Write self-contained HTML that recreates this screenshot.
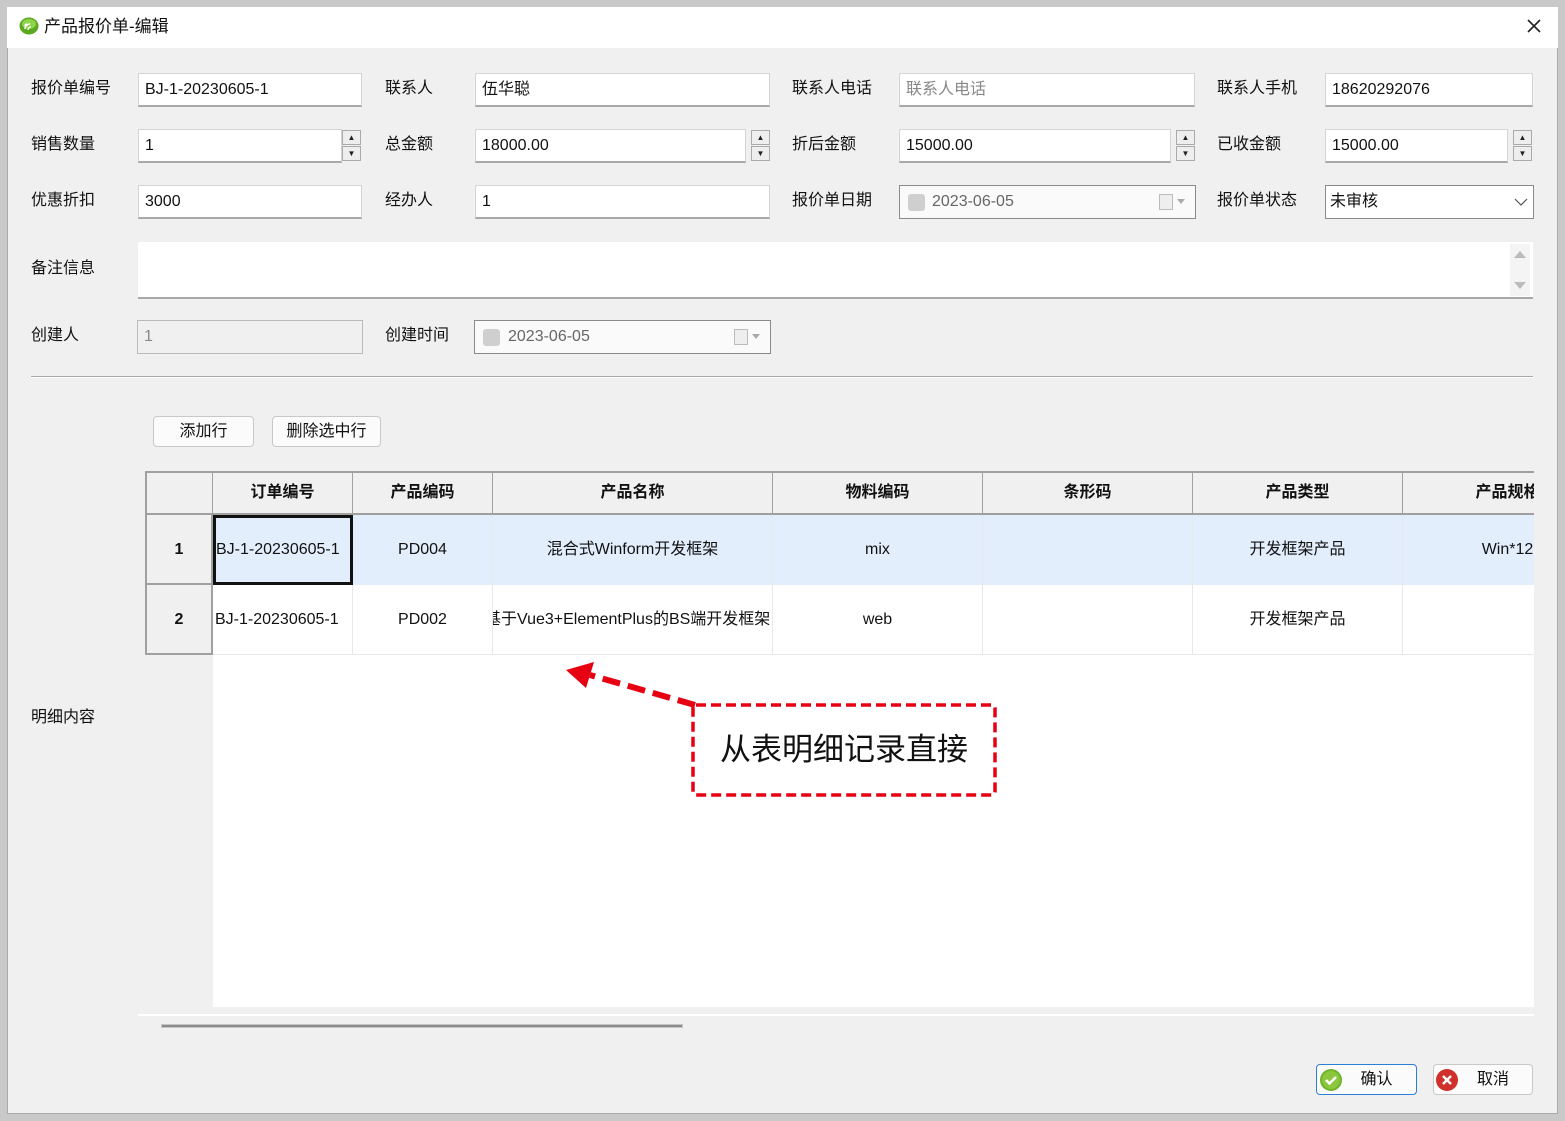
<!DOCTYPE html>
<html><head><meta charset="utf-8"><style>
*{box-sizing:border-box;margin:0;padding:0}
body{width:1565px;height:1121px;background:#c9c9c9;font-family:"Liberation Sans","Noto Sans CJK SC",sans-serif;font-size:16px;color:#111;position:relative;overflow:hidden}
.a{position:absolute}
.win{left:7px;top:7px;width:1551px;height:1107px;background:#f0f0f0;border:1px solid #aaa}
.title{left:7px;top:7px;width:1551px;height:41px;background:#fff}
.lbl{line-height:34px;font-size:16px}
.in{background:#fff;border:1px solid #d4d4d4;border-bottom:2px solid #a8a8a8;height:34px;line-height:31px;padding-left:6px;font-size:16px;white-space:nowrap;overflow:hidden}
.spin{width:20px;height:33px}
.spin div{height:15px;margin:1px 0 1px 1px;border:1px solid #aaa;background:#eee;font-size:8px;line-height:13px;text-align:center;color:#222}
.btn{background:#fbfbfb;border:1px solid #c8c8c8;border-radius:4px;text-align:center;line-height:29px;font-size:16px}
.grid{left:145px;top:471px;width:1389px;height:536px;overflow:hidden}
.c{position:absolute;text-align:center;white-space:nowrap;overflow:hidden;font-size:16px}
.h{background:#f0f0f0;border-right:1px solid #a0a0a0;border-bottom:2px solid #a0a0a0;font-weight:bold;height:44px;line-height:42px;top:0}
.r1{background:#e3eefc;border-right:1px solid #e8e8e8;top:44px;height:70px;line-height:70px}
.r2{background:#fff;border-right:1px solid #e8e8e8;border-bottom:1px solid #e8e8e8;top:114px;height:70px;line-height:70px}
.rh{background:#f0f0f0;border-right:2px solid #a0a0a0;border-bottom:2px solid #a0a0a0;border-left:2px solid #a0a0a0;font-weight:bold}
</style></head><body>
<div class="a win"></div>
<div class="a title"></div>
<svg class="a" style="left:19px;top:17px" width="21" height="18" viewBox="0 0 21 18"><ellipse cx="10" cy="9" rx="9.5" ry="8.5" fill="#5aa820"/><ellipse cx="10" cy="7" rx="7" ry="5" fill="#8fd44a"/><path d="M6 12a5 5 0 0 1 5-5M6 9a2 2 0 0 1 2-2M9 13a3 3 0 0 1 3-3" stroke="#fff" stroke-width="1.5" fill="none"/></svg>
<div class="a" style="left:44px;top:15px;font-size:17px;line-height:24px">产品报价单-编辑</div>
<svg class="a" style="left:1526px;top:18px" width="16" height="16"><path d="M2 2L14 14M14 2L2 14" stroke="#222" stroke-width="1.6"/></svg>

<div class="a lbl" style="left:31px;top:72px">报价单编号</div>
<div class="a in" style="left:138px;top:73px;width:224px">BJ-1-20230605-1</div>
<div class="a lbl" style="left:385px;top:72px">联系人</div>
<div class="a in" style="left:475px;top:73px;width:295px">伍华聪</div>
<div class="a lbl" style="left:792px;top:72px">联系人电话</div>
<div class="a in" style="left:899px;top:73px;width:296px;color:#888">联系人电话</div>
<div class="a lbl" style="left:1217px;top:72px">联系人手机</div>
<div class="a in" style="left:1325px;top:73px;width:208px">18620292076</div>

<div class="a lbl" style="left:31px;top:128px">销售数量</div>
<div class="a in" style="left:138px;top:129px;width:204px">1</div>
<div class="a spin" style="left:341px;top:129px"><div>▲</div><div>▼</div></div>
<div class="a lbl" style="left:385px;top:128px">总金额</div>
<div class="a in" style="left:475px;top:129px;width:271px">18000.00</div>
<div class="a spin" style="left:750px;top:129px"><div>▲</div><div>▼</div></div>
<div class="a lbl" style="left:792px;top:128px">折后金额</div>
<div class="a in" style="left:899px;top:129px;width:272px">15000.00</div>
<div class="a spin" style="left:1175px;top:129px"><div>▲</div><div>▼</div></div>
<div class="a lbl" style="left:1217px;top:128px">已收金额</div>
<div class="a in" style="left:1325px;top:129px;width:183px">15000.00</div>
<div class="a spin" style="left:1512px;top:129px"><div>▲</div><div>▼</div></div>

<div class="a lbl" style="left:31px;top:184px">优惠折扣</div>
<div class="a in" style="left:138px;top:185px;width:224px">3000</div>
<div class="a lbl" style="left:385px;top:184px">经办人</div>
<div class="a in" style="left:475px;top:185px;width:295px">1</div>
<div class="a lbl" style="left:792px;top:184px">报价单日期</div>
<div class="a in" style="left:899px;top:185px;width:297px;background:#fafafa;border:1px solid #8a8a8a;color:#666;padding-left:32px">2023-06-05</div>
<div class="a" style="left:908px;top:194px;width:17px;height:17px;background:#cfcfcf;border-radius:3px"></div>
<div class="a" style="left:1159px;top:194px;width:14px;height:16px;border:1px solid #bbb;background:#eee"></div>
<div class="a" style="left:1177px;top:199px;border:4px solid transparent;border-top:5px solid #aaa"></div>
<div class="a lbl" style="left:1217px;top:184px">报价单状态</div>
<div class="a in" style="left:1325px;top:185px;width:209px;border:1px solid #8a8a8a;padding-left:4px">未审核</div>
<svg class="a" style="left:1514px;top:197px" width="14" height="10"><path d="M1 2l6 6 6-6" stroke="#555" fill="none" stroke-width="1.2"/></svg>

<div class="a lbl" style="left:31px;top:252px">备注信息</div>
<div class="a in" style="left:138px;top:242px;width:1395px;height:57px;border:none;border-bottom:2px solid #a8a8a8"></div>
<div class="a" style="left:1510px;top:244px;width:20px;height:52px;background:#f4f4f4"></div>
<div class="a" style="left:1514px;top:251px;border:6px solid transparent;border-bottom:7px solid #bbb;border-top:0"></div>
<div class="a" style="left:1514px;top:282px;border:6px solid transparent;border-top:7px solid #bbb;border-bottom:0"></div>

<div class="a lbl" style="left:31px;top:319px">创建人</div>
<div class="a in" style="left:137px;top:320px;width:226px;background:#f0f0f0;border:1px solid #bbb;color:#888">1</div>
<div class="a lbl" style="left:385px;top:319px">创建时间</div>
<div class="a in" style="left:474px;top:320px;width:297px;background:#fafafa;border:1px solid #8a8a8a;color:#666;padding-left:33px">2023-06-05</div>
<div class="a" style="left:483px;top:329px;width:17px;height:17px;background:#cfcfcf;border-radius:3px"></div>
<div class="a" style="left:734px;top:329px;width:14px;height:16px;border:1px solid #bbb;background:#eee"></div>
<div class="a" style="left:752px;top:334px;border:4px solid transparent;border-top:5px solid #aaa"></div>

<div class="a" style="left:31px;top:376px;width:1502px;height:2px;background:#a8a8a8;border-bottom:1px solid #fff"></div>

<div class="a btn" style="left:153px;top:416px;width:101px;height:31px">添加行</div>
<div class="a btn" style="left:272px;top:416px;width:109px;height:31px">删除选中行</div>

<div class="a lbl" style="left:31px;top:701px">明细内容</div>

<div class="a grid">
<div class="a" style="left:68px;top:0;width:1321px;height:536px;background:#fff"></div>
<div class="a" style="left:0;top:0;width:1389px;height:2px;background:#a0a0a0"></div>
<div class="c h" style="left:0;width:68px;top:2px;border-left:2px solid #a0a0a0;height:42px;line-height:40px"></div>
<div class="c h" style="left:68px;width:140px;top:2px;height:42px;line-height:40px">订单编号</div>
<div class="c h" style="left:208px;width:140px;top:2px;height:42px;line-height:40px">产品编码</div>
<div class="c h" style="left:348px;width:280px;top:2px;height:42px;line-height:40px">产品名称</div>
<div class="c h" style="left:628px;width:210px;top:2px;height:42px;line-height:40px">物料编码</div>
<div class="c h" style="left:838px;width:210px;top:2px;height:42px;line-height:40px">条形码</div>
<div class="c h" style="left:1048px;width:210px;top:2px;height:42px;line-height:40px">产品类型</div>
<div class="c h" style="left:1258px;width:210px;top:2px;height:42px;line-height:40px">产品规格</div>

<div class="c r1 rh" style="left:0;width:68px">1</div>
<div class="c r1" style="left:68px;width:140px;border:3px solid #111;line-height:64px;text-align:left">BJ-1-20230605-1</div>
<div class="c r1" style="left:208px;width:140px">PD004</div>
<div class="c r1" style="left:348px;width:280px">混合式Winform开发框架</div>
<div class="c r1" style="left:628px;width:210px">mix</div>
<div class="c r1" style="left:838px;width:210px"></div>
<div class="c r1" style="left:1048px;width:210px">开发框架产品</div>
<div class="c r1" style="left:1258px;width:210px">Win*12</div>

<div class="c r2 rh" style="left:0;width:68px">2</div>
<div class="c r2" style="left:68px;width:140px;text-align:left;padding-left:2px">BJ-1-20230605-1</div>
<div class="c r2" style="left:208px;width:140px">PD002</div>
<div class="c r2" style="left:348px;width:280px;text-align:left;text-indent:-8px">基于Vue3+ElementPlus的BS端开发框架</div>
<div class="c r2" style="left:628px;width:210px">web</div>
<div class="c r2" style="left:838px;width:210px"></div>
<div class="c r2" style="left:1048px;width:210px">开发框架产品</div>
<div class="c r2" style="left:1258px;width:210px"></div>
</div>

<div class="a" style="left:138px;top:1014px;width:1396px;height:2px;background:#fff"></div>
<div class="a" style="left:161px;top:1024px;width:522px;height:4px;background:#8c8c8c;border:1px solid #c4c4c4"></div>

<svg class="a" style="left:560px;top:660px" width="450" height="145">
<path d="M135 45 L30 15" stroke="#e60012" stroke-width="6" stroke-dasharray="18,8" fill="none"/>
<path d="M6 10 L34 2 L26 28 Z" fill="#e60012"/>
<rect x="133" y="45" width="302" height="90" rx="3" fill="none" stroke="#e60012" stroke-width="3.5" stroke-dasharray="10,5"/>
</svg>
<div class="a" style="left:693px;top:728px;width:302px;text-align:center;font-size:31px;line-height:44px;color:#111">从表明细记录直接</div>

<div class="a btn" style="left:1316px;top:1064px;width:101px;height:31px;border:1.5px solid #2b7fd6;padding-left:20px">确认</div>
<svg class="a" style="left:1319px;top:1068px" width="24" height="24"><circle cx="12" cy="12" r="11" fill="#6eb42a"/><circle cx="12" cy="12" r="9" fill="#8cc63f"/><path d="M7 12l3.5 3.5L17 9" stroke="#fff" stroke-width="2.5" fill="none"/></svg>
<div class="a btn" style="left:1433px;top:1064px;width:100px;height:31px;padding-left:20px">取消</div>
<svg class="a" style="left:1435px;top:1068px" width="24" height="24"><circle cx="12" cy="12" r="11" fill="#d0302a"/><path d="M8 8l8 8M16 8l-8 8" stroke="#fff" stroke-width="2.5"/></svg>
</body></html>
